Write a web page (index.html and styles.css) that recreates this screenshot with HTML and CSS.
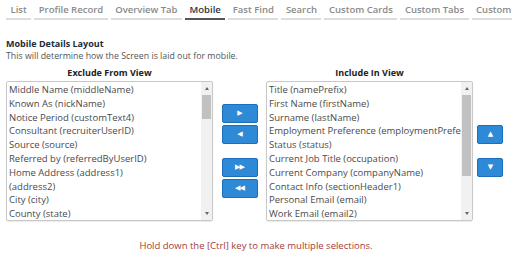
FILE: index.html
```html
<!DOCTYPE html>
<html lang="en">
<head>
    <meta charset="UTF-8">
    <title>Mobile Details Layout</title>
    <link rel="stylesheet" href="styles.css">
</head>
<body>
    <nav class="tabs">
        <a href="#">List</a>
        <a href="#">Profile Record</a>
        <a href="#">Overview Tab</a>
        <a href="#" class="active">Mobile</a>
        <a href="#">Fast Find</a>
        <a href="#">Search</a>
        <a href="#">Custom Cards</a>
        <a href="#">Custom Tabs</a>
        <a href="#">Custom Fields</a>
    </nav>

    <div class="section">
        <h2>Mobile Details Layout</h2>
        <p class="desc">This will determine how the Screen is laid out for mobile.</p>

        <div class="picker">
            <div class="column">
                <h3>Exclude From View</h3>
                <div class="listbox">
                    <div class="items">
                        <div>Middle Name (middleName)</div>
                        <div>Known As (nickName)</div>
                        <div>Notice Period (customText4)</div>
                        <div>Consultant (recruiterUserID)</div>
                        <div>Source (source)</div>
                        <div>Referred by (referredByUserID)</div>
                        <div>Home Address (address1)</div>
                        <div>(address2)</div>
                        <div>City (city)</div>
                        <div>County (state)</div>
                    </div>
                    <div class="scrollbar">
                        <span class="arrow up"></span>
                        <span class="thumb left-thumb"></span>
                        <span class="arrow down"></span>
                    </div>
                </div>
            </div>

            <div class="moves">
                <div class="pair">
                    <button class="btn">&#9654;</button>
                    <button class="btn">&#9664;</button>
                </div>
                <div class="pair">
                    <button class="btn">&#9654;&#9654;</button>
                    <button class="btn">&#9664;&#9664;</button>
                </div>
            </div>

            <div class="column">
                <h3>Include In View</h3>
                <div class="listbox">
                    <div class="items">
                        <div>Title (namePrefix)</div>
                        <div>First Name (firstName)</div>
                        <div>Surname (lastName)</div>
                        <div>Employment Preference (employmentPreference)</div>
                        <div>Status (status)</div>
                        <div>Current Job Title (occupation)</div>
                        <div>Current Company (companyName)</div>
                        <div>Contact Info (sectionHeader1)</div>
                        <div>Personal Email (email)</div>
                        <div>Work Email (email2)</div>
                    </div>
                    <div class="scrollbar">
                        <span class="arrow up"></span>
                        <span class="thumb right-thumb"></span>
                        <span class="arrow down"></span>
                    </div>
                </div>
            </div>

            <div class="order">
                <button class="btn small">&#9650;</button>
                <button class="btn small">&#9660;</button>
            </div>
        </div>

        <p class="hint">Hold down the [Ctrl] key to make multiple selections.</p>
    </div>
</body>
</html>
```

FILE: styles.css
```css
body {
    font-family: 'Open Sans', 'Liberation Sans', sans-serif;
    margin: 0;
    padding: 0;
    background: #fff;
    color: #555;
    font-size: 9.5px;
    overflow: hidden;
    width: 512px;
    height: 258px;
}
.tabs {
    display: flex;
    gap: 3px;
    padding: 0 0 0 6px;
    white-space: nowrap;
    height: 20px;
    overflow: hidden;
}
.tabs a {
    color: #8a8a8a;
    text-decoration: none;
    font-size: 9.5px;
    font-weight: 600;
    padding: 2px 4.5px 0 4.5px;
    line-height: 15px;
    border-bottom: 2px solid #ddd;
    flex-shrink: 0;
}
.tabs a.active {
    color: #2a3340;
    border-bottom-color: #555;
}
.section {
    padding: 0 6px;
}
h2 {
    margin: 17px 0 0 0;
    font-size: 9px;
    font-weight: 700;
    color: #1e2b3a;
    line-height: 13px;
}
.desc {
    margin: 0;
    line-height: 13px;
    font-size: 8.8px;
    color: #555;
}
.picker {
    display: flex;
    margin-top: 4px;
}
.column {
    width: 207px;
}
h3 {
    margin: 0;
    text-align: center;
    font-size: 9px;
    font-weight: 700;
    color: #222;
    line-height: 12px;
    height: 14px;
}
.listbox {
    display: flex;
    border: 1px solid #c8c8c8;
    border-radius: 2px;
    height: 140px;
    box-sizing: border-box;
    overflow: hidden;
    box-shadow: 0 1px 1px rgba(0, 0, 0, 0.08);
}
.items {
    flex: 1;
    padding: 1px 0 0 2px;
    white-space: nowrap;
    overflow: hidden;
    color: #4a4a4a;
}
.items div {
    line-height: 13.8px;
    font-size: 9.5px;
}
.scrollbar {
    width: 11px;
    background: #f1f1f1;
    display: flex;
    flex-direction: column;
    align-items: center;
    flex-shrink: 0;
}
.arrow {
    width: 0;
    height: 0;
    border-left: 2.5px solid transparent;
    border-right: 2.5px solid transparent;
    margin: 5px 0;
}
.arrow.up {
    border-bottom: 3px solid #666;
}
.arrow.down {
    border-top: 3px solid #666;
    margin-top: auto;
}
.thumb {
    width: 9px;
    background: #c1c1c1;
}
.left-thumb {
    height: 24px;
}
.right-thumb {
    height: 81px;
}
.moves {
    width: 53px;
    display: flex;
    flex-direction: column;
    align-items: center;
    padding-top: 37px;
    gap: 14px;
}
.pair {
    display: flex;
    flex-direction: column;
    gap: 2px;
}
.btn {
    width: 36px;
    height: 19px;
    background: #2e8ad6;
    border: 1px solid #1c6fb8;
    border-radius: 2px;
    color: #fff;
    font-size: 7px;
    letter-spacing: -1px;
    padding: 0;
    font-family: 'DejaVu Sans', sans-serif;
    line-height: 17px;
}
.order {
    display: flex;
    flex-direction: column;
    padding: 58px 0 0 4px;
    gap: 14px;
}
.btn.small {
    width: 26px;
}
.hint {
    text-align: center;
    color: #a0403a;
    margin: 18px 0 0 0;
    font-size: 9.5px;
    line-height: 14px;
}
```
